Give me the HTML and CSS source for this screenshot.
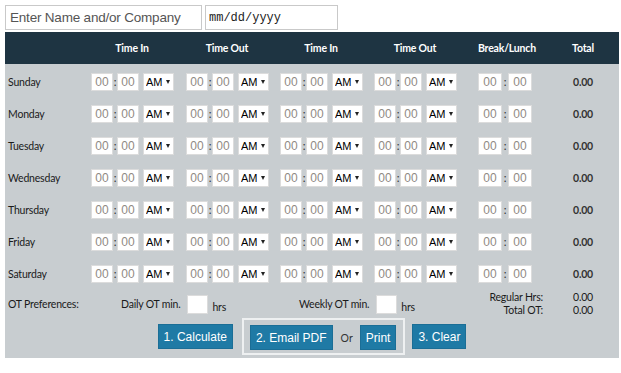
FILE: index.html
```html
<!DOCTYPE html>
<html lang="en">
<head>
    <meta charset="UTF-8">
    <title>Time Card Calculator</title>
    <link rel="stylesheet" href="styles.css">
</head>
<body>

    <div class="top-fields">
        <input type="text" class="name-field" placeholder="Enter Name and/or Company">
        <input type="text" class="date-field" placeholder="mm/dd/yyyy">
    </div>

    <div class="card">
        <div class="grid head">
            <div></div>
            <div><span class="col-title">Time In</span></div>
            <div><span class="col-title">Time Out</span></div>
            <div><span class="col-title">Time In</span></div>
            <div><span class="col-title">Time Out</span></div>
            <div><span class="col-title brk">Break/Lunch</span></div>
            <div class="center">Total</div>
            <div></div>
        </div>

        <div id="rows"></div>

        <div class="grid ot-row">
            <div class="day">OT Preferences:</div>
            <div class="daily">
                <span>Daily OT min.</span>
                <input type="text" class="ot-box">
                <span class="hrs">hrs</span>
            </div>
            <div class="weekly">
                <span>Weekly OT min.</span>
                <input type="text" class="ot-box">
                <span class="hrs">hrs</span>
            </div>
            <div class="sum-labels">
                <span>Regular Hrs:</span>
                <span>Total OT:</span>
            </div>
            <div class="sum-values">
                <span>0.00</span>
                <span>0.00</span>
            </div>
            <div></div>
        </div>

        <div class="actions">
            <button class="btn calc">1. Calculate</button>
            <div class="send-group">
                <button class="btn">2. Email PDF</button>
                <span class="or">Or</span>
                <button class="btn">Print</button>
            </div>
            <button class="btn clear">3. Clear</button>
        </div>
    </div>

    <script>
        // Build one row per day
        const days = ['Sunday', 'Monday', 'Tuesday', 'Wednesday', 'Thursday', 'Friday', 'Saturday'];

        function timeGroup() {
            return `<div><div class="tgroup">
                <input type="text" class="hm" placeholder="00"><span class="colon">:</span><input type="text" class="hm" placeholder="00">
                <span class="ampm"><select><option>AM</option><option>PM</option></select></span>
            </div></div>`;
        }

        const rows = document.getElementById('rows');
        days.forEach(day => {
            const row = document.createElement('div');
            row.className = 'grid day-row';
            row.innerHTML = `<div class="day">${day}</div>`
                + timeGroup() + timeGroup() + timeGroup() + timeGroup()
                + `<div><div class="bgroup"><input type="text" class="bk" placeholder="00"><span class="colon wide">:</span><input type="text" class="bk" placeholder="00"></div></div>`
                + `<div class="center total">0.00</div><div></div>`;
            rows.appendChild(row);
        });
    </script>

</body>
</html>
```

FILE: styles.css
```css
body {
    margin: 0;
    padding: 5px;
    font-family: Lato, "Liberation Sans", sans-serif;
    background-color: #fff;
}
.top-fields {
    display: flex;
    gap: 3px;
    margin-bottom: 2px;
}
.top-fields input {
    height: 25px;
    box-sizing: border-box;
    border: 1px solid #c9c9c9;
    margin: 0;
}
.name-field {
    width: 197px;
    padding: 0 4px;
    font-family: "Liberation Sans", Arial, sans-serif;
    font-size: 13.5px;
    letter-spacing: -0.2px;
}
.name-field::placeholder {
    color: #555;
}
.date-field {
    width: 133px;
    padding: 0 3px;
    font-family: "Liberation Mono", monospace;
    font-size: 12px;
}
.date-field::placeholder {
    color: #222;
}
.card {
    width: 614px;
    background-color: #c8cdd0;
    padding-bottom: 3px;
}
.grid {
    display: grid;
    grid-template-columns: 86px 95px 94px 94px 104px 78px 54px 1fr;
    align-items: center;
    font-size: 10.5px;
    letter-spacing: -0.2px;
}
.head {
    height: 32px;
    margin-bottom: 2px;
    background-color: #1e3442;
    color: #fff;
    font-weight: bold;
}
.col-title {
    display: block;
    width: 82px;
    text-align: center;
}
.col-title.brk {
    width: 54px;
}
.center {
    text-align: center;
}
.day-row {
    height: 32px;
}
.day {
    padding-left: 3px;
    color: #1a1a1a;
}
.tgroup, .bgroup {
    display: flex;
    align-items: center;
}
.tgroup input, .bgroup input, .ot-box {
    height: 18px;
    box-sizing: border-box;
    margin: 0;
    padding: 0;
    border: 1px solid #dcdcdc;
    background-color: #fff;
    text-align: center;
    font-family: "Liberation Sans", Arial, sans-serif;
    font-size: 12px;
}
.hm {
    width: 22px;
}
.bk {
    width: 24px;
}
.tgroup input::placeholder, .bgroup input::placeholder {
    color: #8f8a84;
}
.colon {
    width: 4px;
    text-align: center;
    font-size: 11px;
    color: #333;
    line-height: 10px;
}
.colon.wide {
    width: 6px;
}
.ampm {
    position: relative;
    display: flex;
    margin-left: 4px;
}
.ampm select {
    -webkit-appearance: none;
    appearance: none;
    width: 31px;
    height: 18px;
    margin: 0;
    border: 1px solid #dcdcdc;
    border-radius: 0;
    background-color: #fff;
    padding: 0 0 0 2px;
    font-family: "Liberation Sans", Arial, sans-serif;
    font-size: 11px;
    color: #000;
}
.ampm::after {
    content: "";
    position: absolute;
    right: 4px;
    top: 7px;
    border-left: 2.5px solid transparent;
    border-right: 2.5px solid transparent;
    border-top: 4px solid #222;
    pointer-events: none;
}
.total {
    font-weight: bold;
    color: #333;
}
.ot-row {
    height: 28px;
    color: #1a1a1a;
}
.daily, .weekly {
    display: flex;
    align-items: center;
}
.daily {
    grid-column: 2 / 4;
    padding-left: 30px;
}
.weekly {
    grid-column: 4 / 6;
    padding-left: 19px;
}
.ot-box {
    width: 21px;
    height: 19px;
    margin: 0 4px 0 7px;
}
.hrs {
    padding-top: 5px;
}
.sum-labels, .sum-values {
    display: flex;
    flex-direction: column;
    line-height: 13px;
}
.sum-labels {
    align-items: flex-end;
    padding-right: 13px;
}
.sum-values {
    align-items: center;
}
.actions {
    display: flex;
    justify-content: center;
    align-items: center;
}
.btn {
    height: 25px;
    padding: 0 5px;
    background-color: #1f7aa5;
    border: 1px solid #1b6e96;
    border-radius: 0;
    color: #fff;
    font-family: "Liberation Sans", Arial, sans-serif;
    font-size: 12px;
    cursor: pointer;
}
.send-group {
    display: flex;
    align-items: center;
    border: 2px solid #eef0f1;
    padding: 5px 7px 3px 6px;
    margin: 0 7px 0 9px;
}
.or {
    margin: 0 7px 0 8px;
    font-size: 10.5px;
    color: #333;
}
```
